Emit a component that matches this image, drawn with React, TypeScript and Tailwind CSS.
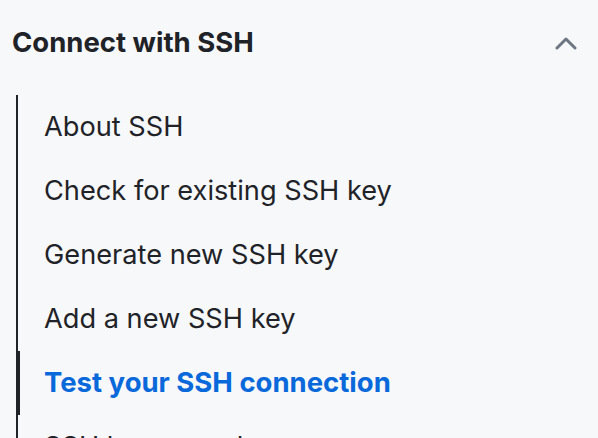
const items = [
  "About SSH",
  "Check for existing SSH key",
  "Generate new SSH key",
  "Add a new SSH key",
  "Test your SSH connection",
  "SSH key passphrases",
];

export default function App() {
  return (
    <div className="w-[598px] h-[438px] overflow-hidden bg-[#f6f8fa] font-['Inter',sans-serif] text-[#1f2328]">
      <div className="flex items-center justify-between h-[86px] pl-[12px] pr-[20px]">
        <h2 className="text-[27.5px] font-bold">Connect with SSH</h2>
        <svg width="24" height="14" viewBox="0 0 24 14" className="text-[#6e7781]">
          <polyline points="3,12 12,3 21,12" fill="none" stroke="currentColor" strokeWidth="3" strokeLinecap="round" strokeLinejoin="round" />
        </svg>
      </div>
      <ul className="mt-[9px] ml-[16px] border-l-2 border-[#1f2328]">
        {items.map((label, i) => {
          const active = i === 4;
          return (
            <li key={label} className="relative flex items-center h-[64px] pl-[26px]">
              {active && <span className="absolute -left-[2px] top-0 bottom-0 w-[4px] bg-[#1f2328]" />}
              <a className={active ? "text-[27.5px] font-bold text-[#0969da]" : "text-[27.2px]"}>{label}</a>
            </li>
          );
        })}
      </ul>
    </div>
  );
}
